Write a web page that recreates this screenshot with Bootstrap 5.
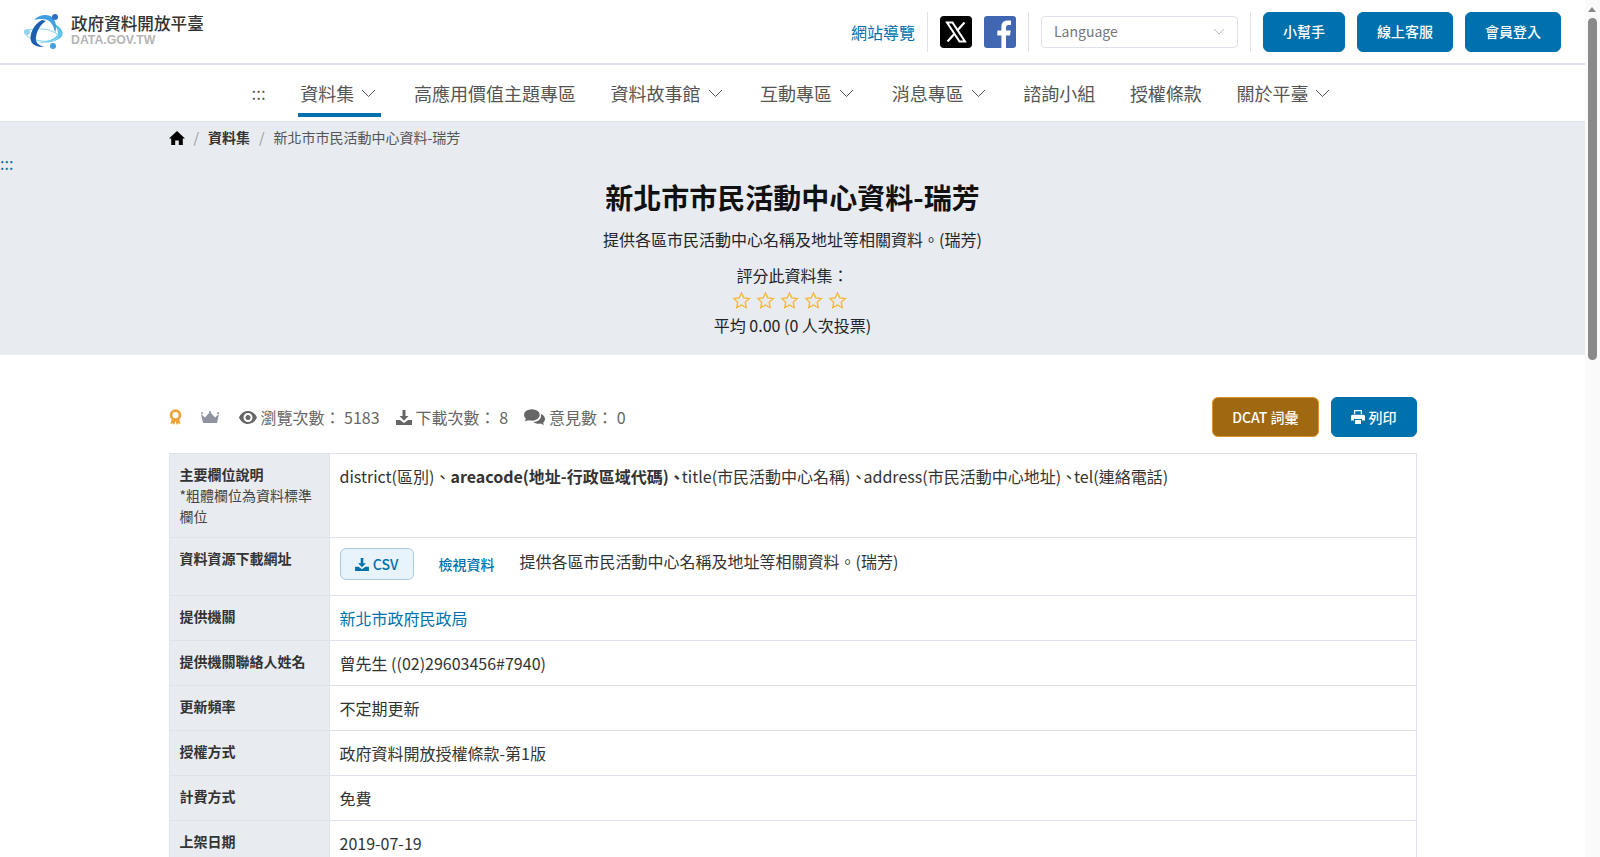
<!DOCTYPE html>
<html lang="zh-Hant">
<head>
  <meta charset="UTF-8" />
  <meta name="viewport" content="width=device-width, initial-scale=1.0" />
  <title>新北市市民活動中心資料-瑞芳</title>
  <link href="https://cdn.jsdelivr.net/npm/bootstrap@5.3.2/dist/css/bootstrap.min.css" rel="stylesheet" />

  <style>
    body {
      font-family: "Noto Sans CJK TC", "Noto Sans", sans-serif;
      color: #212529;
      font-size: 16px;
      padding-right: 15px;
    }
    a { text-decoration: none; }

    /* window scrollbar of the reference */
    .scroll-rail { position: fixed; top: 0; right: 0; bottom: 0; width: 15px; background: #fafafa; }
    .scroll-arrow {
      position: absolute; top: 7px; left: 3px; width: 0; height: 0;
      border-left: 4.5px solid transparent; border-right: 4.5px solid transparent; border-bottom: 5px solid #8a8a8a;
    }
    .scroll-thumb { position: absolute; top: 18px; left: 3px; width: 9px; height: 342px; background: #8a8a8a; border-radius: 5px; }

    /* top bar */
    .top-bar { height: 65px; padding: 12px 24px; border-bottom: 2px solid #dfe2ea; gap: 12px; }
    .logo-box { gap: 8px; }
    .logo-text { margin-bottom: 4px; }
    .logo-name { font-size: 16.6px; line-height: 20px; color: #333; font-weight: 500; white-space: nowrap; }
    .logo-sub { font-family: "Liberation Sans", sans-serif; font-weight: 700; font-size: 12.3px; line-height: 14px; color: #b5b5b5; }
    .guide-link { color: #0071ad; font-size: 16px; }
    .top-sep { width: 1px; height: 40px; background: #dfe2ea; }
    .lang-select {
      width: 197px; height: 32px; font-size: 14px; color: #777;
      border: 1px solid #dfe2ea; border-radius: 4px; padding: 0 12px;
    }
    .btn-brand { background: #0071ad; border-color: #0071ad; color: #fff; font-size: 14px; font-weight: 500; }
    .btn-brand:hover { background: #005e90; color: #fff; }
    .top-btn { height: 40px; padding: 0 19px; display: inline-flex; align-items: center; }

    /* main menu */
    .main-menu { height: 56px; }
    .main-menu a {
      color: #555; font-size: 18px; height: 52px; padding: 8px 2px 4px;
      margin: 0 15.3px; white-space: nowrap; gap: 7px;
    }
    .main-menu a.has-sub { padding-right: 5px; }
    .main-menu a.current { border-bottom: 4px solid #0071ad; padding-bottom: 0; }
    .main-menu a.mark-dots { font-size: 17px; }

    /* title band */
    .hero-band { background: #e8ebf0; height: 234px; border-top: 1px solid #dfe2ea; }
    .inner-wrap { width: 1248px; margin: 0 auto; }
    .crumb-row { height: 31px; font-size: 14px; color: #555; }
    .crumb-row b { color: #333; font-weight: 700; }
    .crumb-sep { color: #999; margin: 0 9px; }
    .corner-dots { height: 20px; color: #0071ad; font-size: 16px; line-height: 20px; }
    .hero-title { font-size: 28px; font-weight: 700; line-height: 40px; margin: 4px 0 10px; color: #111; }
    .hero-desc { font-size: 16px; line-height: 24px; margin-bottom: 12px; }
    .rate-label, .rate-avg { font-size: 16px; line-height: 24px; }
    .star-row { height: 26px; gap: 5px; padding-right: 6px; }

    /* stats */
    .stat-row { margin-top: 42px; height: 40px; margin-bottom: 16px; }
    .stat-item { color: #666; font-size: 16px; gap: 4px; margin-right: 16px; }
    .stat-medal { margin-right: 19px; }
    .stat-crown { margin-right: 20px; }
    .btn-dcat { background: #a16812; border: 1px solid #d9952f; color: #fff; font-size: 14px; font-weight: 500; height: 40px; padding: 0 19px; display: inline-flex; align-items: center; }
    .btn-dcat:hover { background: #8c5a10; color: #fff; }
    .btn-print { height: 40px; padding: 0 19px; display: inline-flex; align-items: center; gap: 4px; }

    /* info table */
    .info-table { border-collapse: collapse; width: 100%; margin-bottom: 0; }
    .info-table th, .info-table td { border: 1px solid #dfe2ea; padding: 10px; vertical-align: top; }
    .info-table th { width: 160px; background: #e8ebf0; font-size: 14px; line-height: 21px; font-weight: 700; color: #333; }
    .info-table th span { display: block; font-weight: 400; color: #444; }
    .info-table td { font-size: 16px; line-height: 24px; color: #333; }
    .info-table td a.org-link { color: #0071ad; }
    .list-sep { display: inline-block; width: 13px; }
    .res-row { margin-bottom: 5px; }
    .btn-csv {
      background: #e9f3fb; border: 1px solid #a9cbe4; color: #0071ad;
      font-size: 14px; font-weight: 500; height: 32px; width: 74px; padding: 0;
      display: inline-flex; align-items: center; justify-content: center; gap: 4px;
    }
    .view-link { color: #0071ad; font-size: 14px; font-weight: 500; margin: 0 25px; }
    .res-desc { margin-top: 1px; }
    .page-tail { height: 1000px; }
  </style>
</head>
<body>

  <div class="top-bar d-flex align-items-center">
    <a href="#" class="d-flex align-items-center logo-box me-auto">
      <svg width="39" height="36" viewBox="0 0 39 36">
        <path d="M29 9C36 12 39.500 17 38.500 21 36 27 24 30 14 28 22 28 33 25 34 19 34 15 31 12 29 9Z" fill="#5cc4ea"/>
        <ellipse cx="18" cy="21" rx="16" ry="6" fill="none" stroke="#8fd8f2" stroke-width="1" transform="rotate(6 18 21)"/>
        <path d="M18 6C10 10 5 20 7 27 8.500 31 13 33 20 33 14 31 11 28 12 23 13 16 17 10 22 7Z" fill="#1c5fb0"/>
        <path d="M10 6C15 1 24-1 29 4 32 8 33 13 31 19 30 12 27 7 22 5.500 18 4.500 14 5 10 6Z" fill="#3f9fe0"/>
        <circle cx="31" cy="3" r="3" fill="#2f6fc0"/>
        <circle cx="3" cy="18" r="3" fill="#8fd4f0"/>
        <circle cx="29" cy="32" r="3" fill="#3f9fe0"/>
      </svg>
      <span class="logo-text">
        <span class="logo-name d-block">政府資料開放平臺</span>
        <span class="logo-sub d-block">DATA.GOV.TW</span>
      </span>
    </a>

    <a href="#" class="guide-link">網站導覽</a>
    <span class="top-sep"></span>
    <a href="#" class="d-flex" aria-label="X">
      <svg width="32" height="32" viewBox="0 0 32 32">
        <rect width="32" height="32" rx="4" fill="#000"/>
        <path d="M7 6.500h5.500l12.500 19h-5.500z" fill="none" stroke="#fff" stroke-width="2"/>
        <path d="M24.500 6.500l-7.400 8.300M14.700 17.500L7.500 25.500" stroke="#fff" stroke-width="2.200" fill="none"/>
      </svg>
    </a>
    <a href="#" class="d-flex" aria-label="Facebook">
      <svg width="32" height="32" viewBox="0 0 32 32">
        <rect width="32" height="32" rx="3" fill="#4267b2"/>
        <path d="M22 32V19.500h4l.7-5H22v-3c0-1.500.6-2.500 2.600-2.500H27V4.600C26.300 4.500 25 4.400 23.600 4.400c-3.700 0-6.200 2.200-6.200 6.300v3.800h-4.100v5h4.100V32z" fill="#fff"/>
      </svg>
    </a>
    <span class="top-sep"></span>
    <div class="lang-select d-flex align-items-center justify-content-between">
      <span>Language</span>
      <svg width="12" height="8" viewBox="0 0 12 8"><path d="M1 1l5 5 5-5" fill="none" stroke="#b8bcc6" stroke-width="1"/></svg>
    </div>
    <span class="top-sep"></span>
    <a href="#" class="btn btn-brand top-btn">小幫手</a>
    <a href="#" class="btn btn-brand top-btn">線上客服</a>
    <a href="#" class="btn btn-brand top-btn">會員登入</a>
  </div>

  <nav class="main-menu d-flex justify-content-center align-items-start">
    <a href="#" class="d-flex align-items-center mark-dots">:::</a>
    <a href="#" class="d-flex align-items-center has-sub current">資料集
      <svg width="15" height="9" viewBox="0 0 15 9"><path d="M1 1l6.500 6.500L14 1" fill="none" stroke="#555" stroke-width="1"/></svg></a>
    <a href="#" class="d-flex align-items-center">高應用價值主題專區</a>
    <a href="#" class="d-flex align-items-center has-sub">資料故事館
      <svg width="15" height="9" viewBox="0 0 15 9"><path d="M1 1l6.500 6.500L14 1" fill="none" stroke="#555" stroke-width="1"/></svg></a>
    <a href="#" class="d-flex align-items-center has-sub">互動專區
      <svg width="15" height="9" viewBox="0 0 15 9"><path d="M1 1l6.500 6.500L14 1" fill="none" stroke="#555" stroke-width="1"/></svg></a>
    <a href="#" class="d-flex align-items-center has-sub">消息專區
      <svg width="15" height="9" viewBox="0 0 15 9"><path d="M1 1l6.500 6.500L14 1" fill="none" stroke="#555" stroke-width="1"/></svg></a>
    <a href="#" class="d-flex align-items-center">諮詢小組</a>
    <a href="#" class="d-flex align-items-center">授權條款</a>
    <a href="#" class="d-flex align-items-center has-sub">關於平臺
      <svg width="15" height="9" viewBox="0 0 15 9"><path d="M1 1l6.500 6.500L14 1" fill="none" stroke="#555" stroke-width="1"/></svg></a>
  </nav>

  <section class="hero-band">
    <div class="inner-wrap crumb-row d-flex align-items-center">
      <svg width="16" height="14" viewBox="0 0 16 14"><path d="M8 0L0 7.500h2.200V14h4V9.500h3.600V14h4V7.500H16z" fill="#000"/></svg>
      <span class="crumb-sep">/</span>
      <b>資料集</b>
      <span class="crumb-sep">/</span>
      <span>新北市市民活動中心資料-瑞芳</span>
    </div>
    <div class="corner-dots">:::</div>
    <div class="text-center">
      <h1 class="hero-title">新北市市民活動中心資料-瑞芳</h1>
      <p class="hero-desc">提供各區市民活動中心名稱及地址等相關資料。(瑞芳)</p>
      <div class="rate-label">評分此資料集：</div>
      <div class="star-row d-flex justify-content-center align-items-center">
        <svg width="19" height="19" viewBox="0 0 24 24"><path d="M12 2.500l2.900 6.200 6.800.9-5 4.700 1.300 6.700-6-3.300-6 3.300 1.300-6.700-5-4.700 6.800-.9z" fill="none" stroke="#f5b83d" stroke-width="1.700"/></svg>
        <svg width="19" height="19" viewBox="0 0 24 24"><path d="M12 2.500l2.900 6.200 6.800.9-5 4.700 1.300 6.700-6-3.300-6 3.300 1.300-6.700-5-4.700 6.800-.9z" fill="none" stroke="#f5b83d" stroke-width="1.700"/></svg>
        <svg width="19" height="19" viewBox="0 0 24 24"><path d="M12 2.500l2.900 6.200 6.800.9-5 4.700 1.300 6.700-6-3.300-6 3.300 1.300-6.700-5-4.700 6.800-.9z" fill="none" stroke="#f5b83d" stroke-width="1.700"/></svg>
        <svg width="19" height="19" viewBox="0 0 24 24"><path d="M12 2.500l2.900 6.200 6.800.9-5 4.700 1.300 6.700-6-3.300-6 3.300 1.300-6.700-5-4.700 6.800-.9z" fill="none" stroke="#f5b83d" stroke-width="1.700"/></svg>
        <svg width="19" height="19" viewBox="0 0 24 24"><path d="M12 2.500l2.900 6.200 6.800.9-5 4.700 1.300 6.700-6-3.300-6 3.300 1.300-6.700-5-4.700 6.800-.9z" fill="none" stroke="#f5b83d" stroke-width="1.700"/></svg>
      </div>
      <div class="rate-avg">平均 0.00 (0 人次投票)</div>
    </div>
  </section>

  <main class="inner-wrap">
    <div class="stat-row d-flex align-items-center">
      <svg class="stat-medal" width="13" height="16" viewBox="0 0 14 17">
        <path d="M3 11l-1.500 5 2.500-.8L5.500 17 7 13l1.500 4 1.500-1.800 2.500.8L11 11z" fill="#eda33a"/>
        <circle cx="7" cy="6.500" r="4.800" fill="none" stroke="#eda33a" stroke-width="3"/>
      </svg>
      <svg class="stat-crown" width="18" height="12" viewBox="0 0 18 12">
        <path d="M0 3l4 3.500L9 1l5 5.500L18 3l-2 9H2z" fill="#8f93a0"/>
        <circle cx="1" cy="2" r="1" fill="#8f93a0"/><circle cx="9" cy="1" r="1" fill="#8f93a0"/><circle cx="17" cy="2" r="1" fill="#8f93a0"/>
      </svg>
      <span class="stat-item d-flex align-items-center">
        <svg width="18" height="13" viewBox="0 0 18 13"><path d="M9 0C5 0 1.800 2.600 0 6.500 1.800 10.400 5 13 9 13s7.200-2.600 9-6.500C16.200 2.600 13 0 9 0zm0 11a4.500 4.500 0 110-9 4.500 4.500 0 010 9zm0-7a2.500 2.500 0 100 5 2.500 2.500 0 000-5z" fill="#666"/></svg>
        瀏覽次數： 5183
      </span>
      <span class="stat-item d-flex align-items-center">
        <svg width="16" height="15" viewBox="0 0 16 15"><path d="M6.500 0h3v6h3L8 10.800 3.500 6h3zM0 10h4l4 3 4-3h4v5H0z" fill="#666"/></svg>
        下載次數： 8
      </span>
      <span class="stat-item d-flex align-items-center">
        <svg width="21" height="16" viewBox="0 0 20 15"><ellipse cx="7.500" cy="5.500" rx="7.500" ry="5.500" fill="#666"/><path d="M2 8l-1 3.500L6 10z" fill="#666"/><path d="M16 4.500c2.500 1 4 2.800 4 4.800 0 1.400-.7 2.600-1.800 3.500l.8 2.200-3.300-1.200c-2.200.5-5.200.1-6.900-1.500 4.500.2 8.500-3 7.200-7.800z" fill="#666"/></svg>
        意見數： 0
      </span>
      <div class="ms-auto d-flex gap-2">
        <a href="#" class="btn btn-dcat me-1">DCAT 詞彙</a>
        <a href="#" class="btn btn-brand btn-print">
          <svg width="14" height="14" viewBox="0 0 14 14"><path d="M3 0h8v4H9.800V1.300H4.200V4H3zM1.500 4.800h11A1.500 1.500 0 0114 6.300V10.500h-3V9H3v1.500H0V6.300a1.500 1.500 0 011.500-1.500zM4 10h6v4H4z" fill="#fff"/></svg>
          列印
        </a>
      </div>
    </div>

    <table class="info-table">
      <tr>
        <th>主要欄位說明<span>*粗體欄位為資料標準欄位</span></th>
        <td>district(區別)、<b>areacode(地址-行政區域代碼)<span class="list-sep">、</span></b>title(市民活動中心名稱)<span class="list-sep">、</span>address(市民活動中心地址)<span class="list-sep">、</span>tel(連絡電話)</td>
      </tr>
      <tr>
        <th>資料資源下載網址</th>
        <td>
          <div class="res-row d-flex align-items-start">
            <a href="#" class="btn btn-csv">
              <svg width="14" height="13" viewBox="0 0 16 15"><path d="M6.500 0h3v6h3L8 10.800 3.500 6h3zM0 10h4l4 3 4-3h4v5H0z" fill="#0071ad"/></svg>
              CSV
            </a>
            <a href="#" class="view-link align-self-center">檢視資料</a>
            <span class="res-desc">提供各區市民活動中心名稱及地址等相關資料。(瑞芳)</span>
          </div>
        </td>
      </tr>
      <tr><th>提供機關</th><td><a href="#" class="org-link">新北市政府民政局</a></td></tr>
      <tr><th>提供機關聯絡人姓名</th><td>曾先生 ((02)29603456#7940)</td></tr>
      <tr><th>更新頻率</th><td>不定期更新</td></tr>
      <tr><th>授權方式</th><td>政府資料開放授權條款-第1版</td></tr>
      <tr><th>計費方式</th><td>免費</td></tr>
      <tr><th>上架日期</th><td>2019-07-19</td></tr>
    </table>
    <div class="page-tail"></div>
  </main>

  <div class="scroll-rail">
    <div class="scroll-arrow"></div>
    <div class="scroll-thumb"></div>
  </div>

  <script src="https://cdn.jsdelivr.net/npm/bootstrap@5.3.2/dist/js/bootstrap.bundle.min.js"></script>
</body>
</html>
